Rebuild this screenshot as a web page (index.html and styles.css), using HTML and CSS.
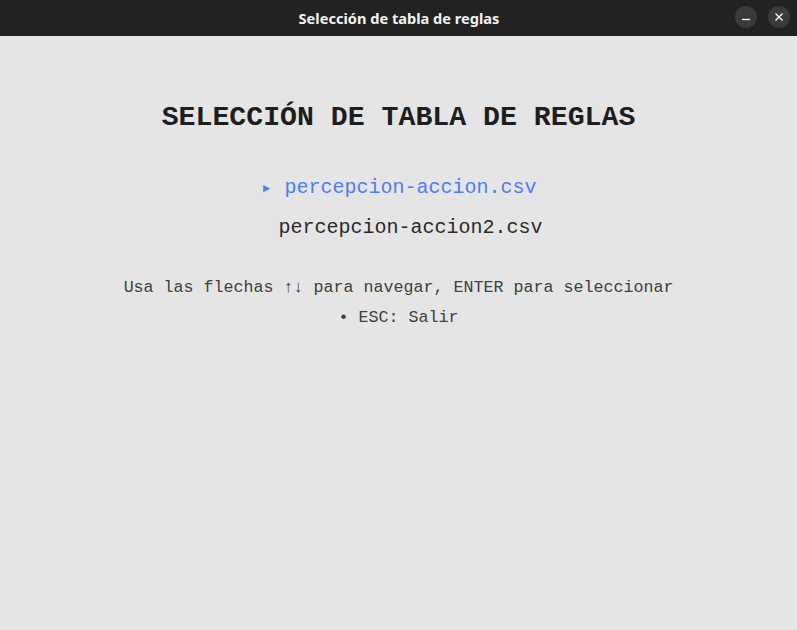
FILE: index.html
```html
<!DOCTYPE html>
<html lang="es">
<head>
<meta charset="utf-8">
<title>Selección de tabla de reglas</title>
<link rel="stylesheet" href="styles.css">
</head>
<body>
<div class="window">
  <header class="titlebar">
    <span class="title">Selección de tabla de reglas</span>
    <div class="controls">
      <span class="btn"><svg width="10" height="10" viewBox="0 0 10 10"><path d="M1 7.5h8" stroke="#fff" stroke-width="1.3"/></svg></span>
      <span class="btn"><svg width="10" height="10" viewBox="0 0 10 10"><path d="M1.5 1.5l7 7M8.5 1.5l-7 7" stroke="#fff" stroke-width="1.3"/></svg></span>
    </div>
  </header>
  <main class="content">
    <h1 class="heading">SELECCIÓN DE TABLA DE REGLAS</h1>
    <ul class="files">
      <li class="file selected"><span class="marker">►</span><span class="gap"></span>percepcion-accion.csv</li>
      <li class="file"><span class="marker"></span><span class="gap"></span>percepcion-accion2.csv</li>
    </ul>
    <p class="help">Usa las flechas ↑↓ para navegar, ENTER para seleccionar</p>
    <p class="help">• ESC: Salir</p>
  </main>
</div>
</body>
</html>
```
FILE: styles.css
```css
html, body {
  margin: 0;
  padding: 0;
  background: #222222;
}
.window {
  width: 797px;
  height: 630px;
  display: flex;
  flex-direction: column;
  background: #e5e5e5;
}
.titlebar {
  height: 36px;
  flex: none;
  background: #222222;
  display: flex;
  align-items: center;
  justify-content: center;
  position: relative;
}
.title {
  font-family: "Noto Sans", "DejaVu Sans", sans-serif;
  font-weight: 700;
  font-size: 14.6px;
  color: #f2f2f2;
  margin-left: 1px;
}
.controls {
  position: absolute;
  right: 7px;
  top: 6px;
  display: flex;
  gap: 11px;
}
.btn {
  width: 22px;
  height: 22px;
  border-radius: 50%;
  background: #3a3a3a;
  display: flex;
  align-items: center;
  justify-content: center;
}
.content {
  flex: 1;
  display: flex;
  flex-direction: column;
  align-items: center;
  font-family: "Liberation Mono", "Courier New", monospace;
  color: #222;
}
.heading {
  margin: 65px 0 0;
  font-size: 28.2px;
  font-weight: 700;
  line-height: 34px;
  color: #1e1e1e;
}
.files {
  list-style: none;
  margin: 41px 0 0;
  padding: 0;
  display: flex;
  flex-direction: column;
  align-items: center;
  gap: 17px;
}
.file {
  font-size: 20px;
  line-height: 23px;
  color: #2a2a2a;
  display: flex;
  align-items: center;
}
.file.selected {
  color: #4b7ff0;
}
.marker {
  width: 12px;
  font-size: 12px;
  line-height: 12px;
  display: flex;
  justify-content: center;
  padding-top: 3px;
}
.gap {
  width: 12px;
}
.help {
  margin: 0;
  font-size: 16.67px;
  line-height: 30px;
  color: #404040;
}
.files + .help {
  margin-top: 34px;
}
```
